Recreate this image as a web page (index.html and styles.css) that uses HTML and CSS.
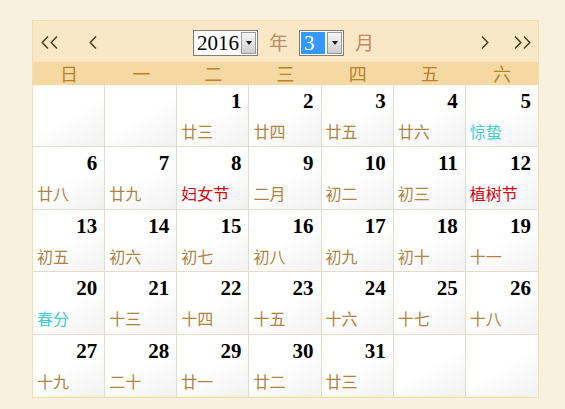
FILE: index.html
```html
<!DOCTYPE html>
<html lang="zh">
<head>
<meta charset="utf-8">
<title>万年历</title>
<link rel="stylesheet" href="styles.css">
</head>
<body>
<div class="cal">
  <div class="head">
    <svg class="arr a-prevyear" width="17" height="13" viewBox="0 0 17 13"><polyline points="7,0.5 1.2,6.5 7,12.5"/><polyline points="16,0.5 10.2,6.5 16,12.5"/></svg>
    <svg class="arr a-prev" width="8" height="13" viewBox="0 0 8 13"><polyline points="7,0.5 1.2,6.5 7,12.5"/></svg>
    <div class="sel sel-year"><span class="sel-text">2016</span><span class="sel-btn"><i class="tri"></i></span></div>
    <span class="unit u-year">年</span>
    <div class="sel sel-month"><span class="sel-text"><span class="hl">3</span></span><span class="sel-btn"><i class="tri"></i></span></div>
    <span class="unit u-month">月</span>
    <svg class="arr a-next" width="8" height="13" viewBox="0 0 8 13"><polyline points="1,0.5 6.8,6.5 1,12.5"/></svg>
    <svg class="arr a-nextyear" width="17" height="13" viewBox="0 0 17 13"><polyline points="1,0.5 6.8,6.5 1,12.5"/><polyline points="10,0.5 15.8,6.5 10,12.5"/></svg>
  </div>
  <div class="week">
    <span>日</span><span>一</span><span>二</span><span>三</span><span>四</span><span>五</span><span>六</span>
  </div>
  <div class="grid">
    <div class="cell"></div>
    <div class="cell"></div>
    <div class="cell"><span class="num">1</span><span class="lunar">廿三</span></div>
    <div class="cell"><span class="num">2</span><span class="lunar">廿四</span></div>
    <div class="cell"><span class="num">3</span><span class="lunar">廿五</span></div>
    <div class="cell"><span class="num">4</span><span class="lunar">廿六</span></div>
    <div class="cell"><span class="num">5</span><span class="lunar term">惊蛰</span></div>

    <div class="cell"><span class="num">6</span><span class="lunar">廿八</span></div>
    <div class="cell"><span class="num">7</span><span class="lunar">廿九</span></div>
    <div class="cell"><span class="num">8</span><span class="lunar fest">妇女节</span></div>
    <div class="cell"><span class="num">9</span><span class="lunar">二月</span></div>
    <div class="cell"><span class="num">10</span><span class="lunar">初二</span></div>
    <div class="cell"><span class="num">11</span><span class="lunar">初三</span></div>
    <div class="cell"><span class="num">12</span><span class="lunar fest">植树节</span></div>

    <div class="cell"><span class="num">13</span><span class="lunar">初五</span></div>
    <div class="cell"><span class="num">14</span><span class="lunar">初六</span></div>
    <div class="cell"><span class="num">15</span><span class="lunar">初七</span></div>
    <div class="cell"><span class="num">16</span><span class="lunar">初八</span></div>
    <div class="cell"><span class="num">17</span><span class="lunar">初九</span></div>
    <div class="cell"><span class="num">18</span><span class="lunar">初十</span></div>
    <div class="cell"><span class="num">19</span><span class="lunar">十一</span></div>

    <div class="cell"><span class="num">20</span><span class="lunar term">春分</span></div>
    <div class="cell"><span class="num">21</span><span class="lunar">十三</span></div>
    <div class="cell"><span class="num">22</span><span class="lunar">十四</span></div>
    <div class="cell"><span class="num">23</span><span class="lunar">十五</span></div>
    <div class="cell"><span class="num">24</span><span class="lunar">十六</span></div>
    <div class="cell"><span class="num">25</span><span class="lunar">十七</span></div>
    <div class="cell"><span class="num">26</span><span class="lunar">十八</span></div>

    <div class="cell"><span class="num">27</span><span class="lunar">十九</span></div>
    <div class="cell"><span class="num">28</span><span class="lunar">二十</span></div>
    <div class="cell"><span class="num">29</span><span class="lunar">廿一</span></div>
    <div class="cell"><span class="num">30</span><span class="lunar">廿二</span></div>
    <div class="cell"><span class="num">31</span><span class="lunar">廿三</span></div>
    <div class="cell"></div>
    <div class="cell"></div>
  </div>
</div>
</body>
</html>
```
FILE: styles.css
```css
html, body {
  margin: 0;
  padding: 0;
  background: #f8f1df;
}
body {
  font-family: "Noto Sans CJK SC", "Liberation Sans", sans-serif;
}
.cal {
  margin: 20px 0 0 32px;
  width: 507px;
  box-sizing: border-box;
  border: 1px solid #f2dfb0;
  background: #fff;
}
.head {
  height: 41px;
  background: #f9e7c5;
  display: flex;
  align-items: center;
}
.arr {
  display: block;
  fill: none;
  stroke: #4a3520;
  stroke-width: 1.4;
  margin-top: 2px;
}
.a-prevyear { margin-left: 8px; }
.a-prev { margin-left: 31px; }
.a-next { margin-left: 107px; }
.a-nextyear { margin-left: 25px; }

.sel {
  display: flex;
  height: 26px;
  box-sizing: border-box;
  border: 1px solid #7d7d7d;
  background: #fff;
  margin-top: 3px;
}
.sel-year { margin-left: 96px; }
.sel-month { margin-left: 11px; }
.sel-text {
  font-family: "Liberation Serif", serif;
  font-size: 21px;
  line-height: 24px;
  color: #000;
  padding: 0 2px 0 3px;
}
.sel-month .sel-text {
  padding: 1px 2px 1px 1px;
  display: flex;
}
.hl {
  display: block;
  width: 21px;
  height: 22px;
  line-height: 22px;
  padding-left: 3px;
  background: #3399ff;
  color: #fff;
}
.sel-btn {
  width: 15px;
  margin: 1px 1px 1px 0;
  box-sizing: border-box;
  border: 1px solid #9a9a9a;
  background: linear-gradient(#f7f7f7, #cdcdcd);
  display: flex;
  align-items: center;
  justify-content: center;
}
.tri {
  display: block;
  width: 0;
  height: 0;
  border-left: 3px solid transparent;
  border-right: 3px solid transparent;
  border-top: 4px solid #111;
}
.unit {
  font-size: 19px;
  line-height: 24px;
  color: #bb8a68;
  margin-top: 1px;
}
.u-year { margin-left: 11px; }
.u-month { margin-left: 11px; }

.week {
  height: 23px;
  background: #f6d9a2;
  display: grid;
  grid-template-columns: repeat(7, 1fr);
}
.week span {
  text-align: center;
  font-size: 18px;
  line-height: 23px;
  color: #b3832e;
}

.grid {
  height: 312px;
  display: grid;
  grid-template-columns: repeat(7, 1fr);
  grid-template-rows: repeat(5, 1fr);
}
.cell {
  border-right: 1px solid #e2ddcf;
  border-bottom: 1px solid #e2ddcf;
  padding: 4px 7px 0 4px;
  display: flex;
  flex-direction: column;
  background: linear-gradient(150deg, #ffffff 50%, #f1f1f1 100%);
  min-width: 0;
}
.cell:nth-child(7n) { border-right: none; }
.cell:nth-child(n+29) { border-bottom: none; }
.num {
  text-align: right;
  font-family: "Liberation Serif", serif;
  font-weight: bold;
  font-size: 21px;
  line-height: 24px;
  color: #000;
}
.lunar {
  margin-top: 9px;
  font-size: 16px;
  line-height: 19px;
  color: #ac8444;
  white-space: nowrap;
}
.lunar.fest { color: #d8000f; }
.lunar.term { color: #44cccc; }
```
